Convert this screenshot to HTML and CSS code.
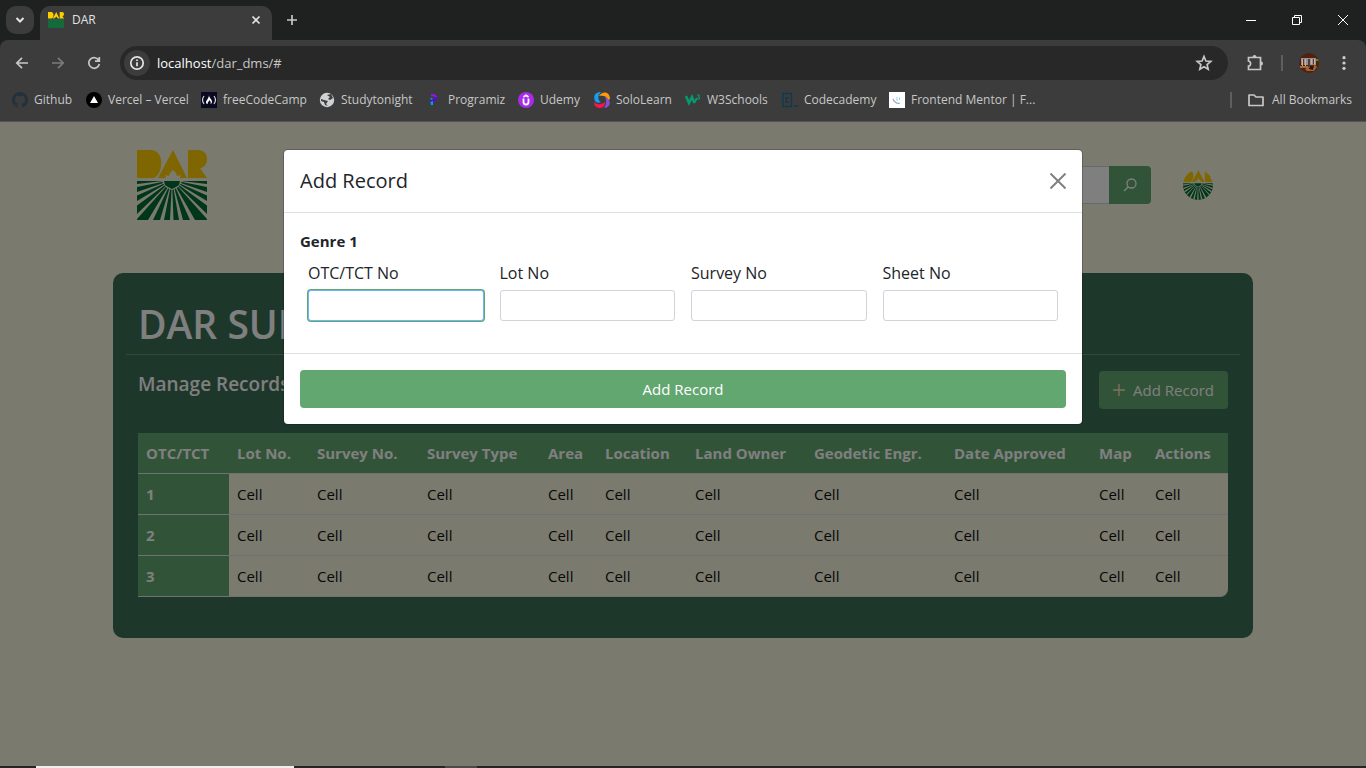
FILE: index.html
```html
<!DOCTYPE html>
<html lang="en">
<head>
<meta charset="utf-8">
<title>DAR</title>
<link rel="stylesheet" href="styles.css">
</head>
<body>
<svg class="defs" aria-hidden="true">
  <defs>
    <g id="dar-top">
      <path d="M0 0H15C22 1 25 8 24 15C24 21 21 26 17 28H0Z"/>
      <path d="M36 0L50 28H43L44 25L40 26L39 23L36 20L33 23L32 26L28 25L29 28H21Z"/>
      <path d="M51 0H61C67 0 70 4 70 9C70 14 67 18 63 18L70 28H51Z"/>
    </g>
    <g id="dar-field">
      <path d="M0 31H70V70H0Z"/>
      <path class="rays" d="M35 30L0 34V37ZM35 30L0 42V45.500ZM35 30L0 51V55.500ZM35 30L0 64V69ZM35 30L11 70H16ZM35 30L23 70H27ZM35 30L33 70H36.500ZM35 30L42 70H46ZM35 30L53 70H58ZM35 30L70 64V69ZM35 30L70 51V55.500ZM35 30L70 42V45.500ZM35 30L70 34V37Z"/>
      <path class="rays" d="M25 31L27 35L30 38L35 40L40 38L43 35L45 31Z"/>
      <path d="M27 31H43L42 35L39 37L35 39L31 37L28 35Z"/>
    </g>
  </defs>
</svg>
<div class="browser">
  <header class="chrome">
    <div class="tabstrip">
      <button class="tab-search" aria-label="Search tabs"><svg width="12" height="12" viewBox="0 0 12 12"><path d="M2.500 4L6 7.500L9.500 4" class="line bold"/></svg></button>
      <div class="tab">
        <svg class="favicon" width="16" height="16" viewBox="0 0 70 70"><use href="#dar-top" fill="#fc0"/><use href="#dar-field" class="tab-field"/></svg>
        <span class="tab-title">DAR</span>
        <button class="plain" aria-label="Close tab"><svg width="12" height="12" viewBox="0 0 12 12"><path d="M2.500 2.500L9.500 9.500M9.500 2.500L2.500 9.500" class="line"/></svg></button>
      </div>
      <button class="plain new-tab" aria-label="New tab"><svg width="12" height="12" viewBox="0 0 12 12"><path d="M6 1V11M1 6H11" class="line"/></svg></button>
      <div class="window-controls">
        <button class="plain" aria-label="Minimize"><svg width="12" height="12" viewBox="0 0 12 12"><path d="M1 6.500H11" class="thin"/></svg></button>
        <button class="plain" aria-label="Restore"><svg width="12" height="12" viewBox="0 0 12 12"><path d="M1.500 3.500H8.500V10.500H1.500ZM3.500 3.500V1.500H10.500V8.500H8.500" class="thin"/></svg></button>
        <button class="plain" aria-label="Close"><svg width="12" height="12" viewBox="0 0 12 12"><path d="M1 1L11 11M11 1L1 11" class="thin"/></svg></button>
      </div>
    </div>
    <div class="toolbar">
      <div class="nav">
        <button class="plain" aria-label="Back"><svg width="16" height="16" viewBox="0 0 16 16"><path d="M14 8H3M8 2.800L2.800 8L8 13.200" class="line"/></svg></button>
        <button class="plain dim" aria-label="Forward"><svg width="16" height="16" viewBox="0 0 16 16"><path d="M2 8H13M8 2.800L13.200 8L8 13.200" class="line"/></svg></button>
        <button class="plain" aria-label="Reload"><svg width="16" height="16" viewBox="0 0 16 16"><path d="M12.800 5.500A5.300 5.300 0 1 0 13.300 9M13.300 2V6.200H9" class="line"/></svg></button>
      </div>
      <div class="omnibox">
        <button class="site-info" aria-label="Site information"><svg width="16" height="16" viewBox="0 0 16 16"><circle cx="8" cy="8" r="6.200" class="line"/><path d="M8 7.200V11.300M8 4.500V6" class="line"/></svg></button>
        <span class="url"><b>localhost</b>/dar_dms/#</span>
        <button class="plain" aria-label="Bookmark this tab"><svg width="18" height="18" viewBox="0 0 18 18"><path d="M9 2.500L10.900 7L15.800 7.400L12.100 10.600L13.200 15.300L9 12.800L4.800 15.300L5.900 10.600L2.200 7.400L7.100 7Z" class="line"/></svg></button>
      </div>
      <div class="tools">
        <button class="plain" aria-label="Extensions"><svg width="18" height="18" viewBox="0 0 18 18"><path d="M2.500 3.500H14.500V15.500H2.500V12C5 12 5.500 7.500 2.500 7Z" class="line"/><path d="M6.500 3A2 2 0 0 1 10.500 3ZM15 7.500A2 2 0 0 1 15 11.500Z" fill="#c7c7c7"/></svg></button>
        <span class="bar"></span>
        <button class="plain" aria-label="Profile"><svg width="20" height="20" viewBox="0 0 20 20"><clipPath id="pc"><circle cx="10" cy="10" r="10"/></clipPath><g clip-path="url(#pc)"><path fill="#54200b" d="M0 0H20V20H0Z"/><path fill="#8794a4" d="M2 5H17V12H2Z"/><path stroke="#d4ac8b" stroke-width="1" d="M3.500 6V14M6.500 6V14M12.500 6V11M15.500 6V12"/><path fill="#a0703f" d="M0 13H9V15H0Z"/><path fill="#5d3828" d="M9 6H11V14H9ZM4 6H5V12H4ZM14 6H15V11H14Z"/><path fill="#a36335" d="M6 16L15 11L18 14L15 18L8 18Z"/><path fill="#2d160f" d="M11 13L15 12L14 17L10 16Z"/><path fill="#628021" d="M17 6H20V8H17Z"/></g></svg></button>
        <button class="plain" aria-label="Menu"><svg width="16" height="16" viewBox="0 0 16 16" fill="#d0d0d0"><circle cx="8" cy="2.700" r="1.600"/><circle cx="8" cy="8" r="1.600"/><circle cx="8" cy="13.300" r="1.600"/></svg></button>
      </div>
    </div>
    <nav class="bookmarks">
      <a class="w-github" href="#"><svg width="16" height="16" viewBox="0 0 16 16"><path fill="#24303a" d="M8 0A8 8 0 0 0 5.500 15.600C5.900 15.700 6 15.400 6 15.200V13.800C3.800 14.300 3.300 12.800 3.300 12.800C2.900 11.900 2.400 11.700 2.400 11.700C1.700 11.200 2.500 11.200 2.500 11.200C3.300 11.300 3.700 12 3.700 12C4.400 13.200 5.600 12.900 6.100 12.700C6.100 12.100 6.400 11.800 6.600 11.600C4.800 11.400 3 10.700 3 7.700C3 6.800 3.300 6.100 3.800 5.500C3.700 5.300 3.500 4.500 3.900 3.400C3.900 3.400 4.600 3.200 6 4.200A8 8 0 0 1 10 4.200C11.500 3.200 12.200 3.400 12.200 3.400C12.600 4.500 12.300 5.300 12.200 5.500C12.700 6.100 13 6.800 13 7.700C13 10.700 11.200 11.400 9.400 11.600C9.700 11.900 10 12.300 10 13.100V15.200C10 15.400 10.100 15.700 10.500 15.600A8 8 0 0 0 8 0Z"/></svg>Github</a>
      <a class="w-vercel" href="#"><svg width="16" height="16" viewBox="0 0 16 16"><circle cx="8" cy="8" r="8"/><path fill="#fff" d="M8 4L12 11H4Z"/></svg>Vercel – Vercel</a>
      <a class="w-fcc" href="#"><svg width="16" height="16" viewBox="0 0 16 16"><path fill="#0a0a23" d="M0 0H16V16H0Z"/><path d="M3 4Q0 8 3 12M13 4Q16 8 13 12" fill="none" stroke="#d5d5de" stroke-width="1.200"/><path fill="#fff" d="M8 3C8 6 11 7 11 10C11 11 10 12 9.500 12C10.500 10 9 9 8.500 8C8 10 6 10 7 12C4 12 5 9 6 8C7 6 8 5 8 3Z"/></svg>freeCodeCamp</a>
      <a class="w-study" href="#"><svg width="16" height="16" viewBox="0 0 16 16"><circle cx="8" cy="8" r="7.200" fill="#cfd1d3"/><path fill="#3c3c3c" d="M2 7L5 8L9 9L7 12L9 14L6 13L5 10L2 9ZM8 3L12 2L14 6L11 8L9 7L11 5Z"/></svg>Studytonight</a>
      <a class="w-prog" href="#"><svg width="16" height="16" viewBox="0 0 16 16"><path d="M5 3.500L8 3L11 5.500" fill="none" stroke="#9217ee" stroke-width="1.800"/><path d="M11 5.500L8 8L5 9" fill="none" stroke="#5a00ff" stroke-width="2"/><path fill="#009eff" d="M4.500 6H6.500V7.500H4.500ZM4.500 10L7 9V13H5Z"/></svg>Programiz</a>
      <a class="w-udemy" href="#"><svg width="16" height="16" viewBox="0 0 16 16"><circle cx="8" cy="8" r="8" fill="#a92bea"/><path d="M5.500 5L8 3.300L10.500 5M5.500 6.500V10C5.500 13.300 10.500 13.300 10.500 10V6.500" fill="none" stroke="#fff" stroke-width="1.800"/></svg>Udemy</a>
      <a class="w-solo" href="#"><svg width="16" height="16" viewBox="0 0 16 16"><path fill="#149ef2" d="M7 0C1 0-1 4 1 9C2 11 5 11 7 10C4 8 3 4 7 0Z"/><path fill="#ff9b08" d="M5 4C8-1 15-1 16 6C16 7 15 8 14 8C13 4 9 3 5 4Z"/><path fill="#8650d6" d="M11 5C17 7 18 15 10 16C12 13 13 9 11 5Z"/><path fill="#fa164c" d="M0 10C3 13 7 13 11 10C11 15 8 16 5 16C1 15 0 13 0 10Z"/></svg>SoloLearn</a>
      <a class="w-w3" href="#"><svg width="16" height="16" viewBox="0 0 16 16"><path d="M1 4L4 11L7 5L9.500 11" fill="none" stroke="#059b70" stroke-width="2.600"/><path d="M9 11L12 6" fill="none" stroke="#059b70" stroke-width="2"/><path d="M12 3H14.500L13 5H14.500V7H12" fill="none" stroke="#059b70"/></svg>W3Schools</a>
      <a class="w-code" href="#"><svg width="16" height="16" viewBox="0 0 16 16"><path d="M1 1.500H9.500V14.500H1ZM7 6H4V10H7M12 14H16" fill="none" stroke="#10394d" stroke-width="1.400"/></svg>Codecademy</a>
      <a class="w-fem" href="#"><svg width="16" height="16" viewBox="0 0 16 16"><path fill="#fff" d="M0 0H16V16H0Z"/><path d="M4 7C5 10 8 12 11 11" fill="none" stroke="#99a8cf" stroke-width="1.200"/><path d="M8 5V9M10.500 5.500V8" fill="none" stroke="#8fd9dd"/></svg>Frontend Mentor | F...</a>
      <span class="bar"></span>
      <a class="all" href="#"><svg width="16" height="16" viewBox="0 0 16 16"><path d="M1 3H6L8 5H15V13.500H1Z" class="line folder"/></svg>All Bookmarks</a>
    </nav>
  </header>
  <div class="viewport">
    <div class="container">
      <header class="site-header">
        <svg width="70" height="70" viewBox="0 0 70 70" role="img" aria-label="DAR"><use href="#dar-top" class="gold"/><use href="#dar-field" class="field"/></svg>
        <form class="search">
          <input type="search" aria-label="Search">
          <button type="button" aria-label="Search"><svg width="14" height="14" viewBox="0 0 14 14"><circle cx="8.500" cy="5.500" r="4.500"/><path d="M5.300 8.700L1 13"/></svg></button>
        </form>
        <svg class="avatar" width="30" height="30" viewBox="0 0 70 70"><clipPath id="ac"><circle cx="35" cy="35" r="35"/></clipPath><g clip-path="url(#ac)"><use href="#dar-top" class="gold"/><use href="#dar-field" class="field"/></g></svg>
      </header>
      <main class="card">
        <h1>DAR SURVEY</h1>
        <div class="card-body">
          <div class="manage">
            <h2>Manage Records</h2>
            <button class="btn"><svg width="12" height="12" viewBox="0 0 12 12"><path d="M6 0V12M0 6H12"/></svg>Add Record</button>
          </div>
          <table>
            <colgroup><col class="c91"><col class="c80"><col class="c110"><col class="c121"><col class="c57"><col class="c90"><col class="c119"><col class="c140"><col class="c145"><col class="c56"><col class="c81"></colgroup>
            <thead><tr><th>OTC/TCT</th><th>Lot No.</th><th>Survey No.</th><th>Survey Type</th><th>Area</th><th>Location</th><th>Land Owner</th><th>Geodetic Engr.</th><th>Date Approved</th><th>Map</th><th>Actions</th></tr></thead>
            <tbody>
              <tr><th>1</th><td>Cell</td><td>Cell</td><td>Cell</td><td>Cell</td><td>Cell</td><td>Cell</td><td>Cell</td><td>Cell</td><td>Cell</td><td>Cell</td></tr>
              <tr><th>2</th><td>Cell</td><td>Cell</td><td>Cell</td><td>Cell</td><td>Cell</td><td>Cell</td><td>Cell</td><td>Cell</td><td>Cell</td><td>Cell</td></tr>
              <tr><th>3</th><td>Cell</td><td>Cell</td><td>Cell</td><td>Cell</td><td>Cell</td><td>Cell</td><td>Cell</td><td>Cell</td><td>Cell</td><td>Cell</td></tr>
            </tbody>
          </table>
        </div>
      </main>
    </div>
    <div class="backdrop">
      <form class="modal" role="dialog" aria-labelledby="modal-title">
        <div class="modal-header">
          <h3 id="modal-title">Add Record</h3>
          <button type="button" class="plain" aria-label="Close"><svg width="16" height="16" viewBox="0 0 16 16"><path d="M0.500 0.500L15.500 15.500M15.500 0.500L0.500 15.500"/></svg></button>
        </div>
        <div class="modal-body">
          <h4>Genre 1</h4>
          <div class="fields">
            <div class="field-group"><label for="otc">OTC/TCT No</label><input class="active" id="otc" type="text"></div>
            <div class="field-group"><label for="lot">Lot No</label><input id="lot" type="text"></div>
            <div class="field-group"><label for="survey">Survey No</label><input id="survey" type="text"></div>
            <div class="field-group"><label for="sheet">Sheet No</label><input id="sheet" type="text"></div>
          </div>
        </div>
        <div class="modal-footer"><button type="button" class="btn wide">Add Record</button></div>
      </form>
    </div>
  </div>
  <footer class="taskbar"><span class="task-search"></span><span class="task-app"></span></footer>
</div>
</body>
</html>
```

FILE: styles.css
```css
* { box-sizing: border-box; }
body { margin: 0; font: 15px/24px "Segoe UI", "Open Sans", "Noto Sans", sans-serif; color: #212529; }
h1, h2, h3, h4 { margin: 0; }
button, input { font: inherit; }
svg { display: block; flex: none; }
.defs { position: absolute; width: 0; height: 0; }
.browser { min-height: 100vh; display: flex; flex-direction: column; }

.line { fill: none; stroke: currentColor; stroke-width: 1.7; }
.bold { stroke-width: 2; }
.thin { fill: none; stroke: #fff; stroke-width: 1; }
.folder { stroke-linejoin: round; }
.plain { display: flex; align-items: center; justify-content: center; padding: 0; border: 0; background: none; color: inherit; }
.dim { color: #7b7b7b; }
.bar { width: 2px; height: 16px; background: #5e5e5e; }

.chrome { background: #1f2120; color: #c7c7c7; font-size: 12px; line-height: 16px; }
.tabstrip { height: 40px; display: flex; align-items: center; }
.tab-search { width: 28px; height: 28px; margin: 0 6px; padding: 0; border: 0; border-radius: 10px; background: #3c3c3c; color: #e3e3e3; display: flex; align-items: center; justify-content: center; }
.tab { width: 232px; height: 34px; align-self: flex-end; padding: 0 10px 6px 8px; display: flex; align-items: center; gap: 8px; border-radius: 10px 10px 0 0; background: #3c3c3c; color: #e3e3e3; }
.tab-title { flex: 1; }
.new-tab { margin-left: 14px; }
.window-controls { margin-left: auto; display: flex; }
.window-controls .plain { width: 46px; height: 40px; }
.tab-field { fill: #0b7139; --ray: #2b5c40; }

.toolbar { height: 46px; padding-left: 14px; display: flex; align-items: center; background: #3c3c3c; border-radius: 8px 8px 0 0; }
.nav { display: flex; gap: 20px; margin-right: 18px; }
.omnibox { flex: 1; height: 34px; padding: 0 15px 0 4px; display: flex; align-items: center; border-radius: 17px; background: #282828; }
.site-info { width: 26px; height: 26px; margin-right: 7px; padding: 0; border: 0; border-radius: 13px; background: #3c3c3c; color: #e3e3e3; display: flex; align-items: center; justify-content: center; }
.url { flex: 1; font-size: 13px; }
.url b { font-weight: 400; color: #fff; }
.tools { display: flex; align-items: center; gap: 17px; padding: 0 14px 0 18px; }
.tools .bar { margin-right: -1px; }

.bookmarks { height: 36px; padding: 0 14px 8px 12px; display: flex; align-items: center; background: #3c3c3c; border-bottom: 1px solid #55554f; }
.bookmarks a { display: flex; align-items: center; gap: 6px; color: inherit; text-decoration: none; white-space: nowrap; }
.bookmarks .bar { margin: 0 16px 0 auto; }
.bookmarks .all { gap: 8px; }
.w-github { width: 74px; }
.w-vercel { width: 115px; }
.w-fcc { width: 118px; }
.w-study { width: 107px; }
.w-prog { width: 92px; }
.w-udemy { width: 76px; }
.w-solo { width: 91px; }
.w-w3 { width: 97px; }
.w-code { width: 107px; }

.viewport { position: relative; flex: 1; background: #f6f4dc; }
.container { max-width: 1140px; margin: 0 auto; }
.site-header { height: 151px; padding: 28px 40px 0 24px; display: flex; align-items: flex-start; }
.gold { fill: #fc0; }
.field { fill: #006d35; --ray: #f6f4dc; }
.rays { fill: var(--ray); }
.search { display: flex; height: 38px; margin: 16px 32px 0 auto; }
.search input { width: 240px; min-width: 0; border: 1px solid #ced4da; border-right: 0; border-radius: 4px 0 0 4px; background: #fff; }
.search button { width: 42px; padding: 0; border: 0; border-radius: 0 4px 4px 0; background: #62a670; display: flex; align-items: center; justify-content: center; }
.search svg { fill: none; stroke: #fff; stroke-width: 1.3; }
.avatar { margin-top: 20px; }

.card { padding: 24px 13px 41px; border-radius: 10px; background: #3c6e56; color: #fff; }
.card h1 { padding: 3px 12px 6px; border-bottom: 1px solid #6a8f7d; font-size: 39px; line-height: 48px; font-weight: 600; }
.card-body { padding: 16px 12px 0; }
.manage { display: flex; justify-content: space-between; align-items: flex-start; margin-bottom: 24px; }
.manage h2 { font-size: 19px; line-height: 26px; font-weight: 600; }
.btn { height: 38px; padding: 0 14px; border: 0; border-radius: 4px; background: #62a670; color: #fff; display: flex; align-items: center; justify-content: center; gap: 8px; }
.btn svg { stroke: #ffe7c0; stroke-width: 1.3; }

table { width: 100%; table-layout: fixed; border-collapse: separate; border-spacing: 0; color: #212529; }
th, td { height: 41px; padding: 0 8px; text-align: left; border-bottom: 1px solid #dee2e6; white-space: nowrap; }
th { background: #62a670; color: #fff; font-weight: 700; }
td { background: #f6f4dc; color: #111; }
tbody tr:last-child td:last-child { border-radius: 0 0 8px 0; }
.c91 { width: 91px; } .c80 { width: 80px; } .c110 { width: 110px; } .c121 { width: 121px; }
.c57 { width: 57px; } .c90 { width: 90px; } .c119 { width: 119px; } .c140 { width: 140px; }
.c145 { width: 145px; } .c56 { width: 56px; } .c81 { width: 81px; }

.backdrop { position: absolute; inset: 0; padding: 28px 16px; background: rgba(0, 0, 0, 0.5); }
.modal { max-width: 798px; margin: 0 auto; border-radius: 4px; background: #fff; box-shadow: 0 0 0 1px rgba(0, 0, 0, 0.2); }
.modal-header { height: 63px; padding: 0 16px; display: flex; align-items: center; justify-content: space-between; border-bottom: 1px solid #dee2e6; }
.modal-header h3 { font-size: 20px; line-height: 30px; font-weight: 500; }
.modal-header svg { stroke: #808080; stroke-width: 2; }
.modal-body { padding: 16px 16px 32px; }
.modal-body h4 { font-size: 15px; line-height: 24px; font-weight: 700; }
.fields { display: grid; grid-template-columns: repeat(4, 1fr); gap: 16px; padding: 8px 8px 0; }
.field-group { display: flex; flex-direction: column; gap: 5px; min-width: 0; }
.field-group label { font-size: 16px; line-height: 24px; font-weight: 500; }
.field-group input { width: 100%; height: 31px; padding: 4px 8px; border: 1px solid #ced4da; border-radius: 3px; background: #fff; outline: none; }
.field-group .active { border-color: #6bb5ff; box-shadow: 0 0 0 1px #62a670; }
.modal-footer { padding: 16px; border-top: 1px solid #dee2e6; }
.wide { width: 100%; }

.taskbar { height: 2px; display: flex; background: #252525; }
.task-search { width: 258px; margin-left: 36px; background: #eee; }
.task-app { width: 32px; margin-left: 151px; background: #4a4a4a; }
```
